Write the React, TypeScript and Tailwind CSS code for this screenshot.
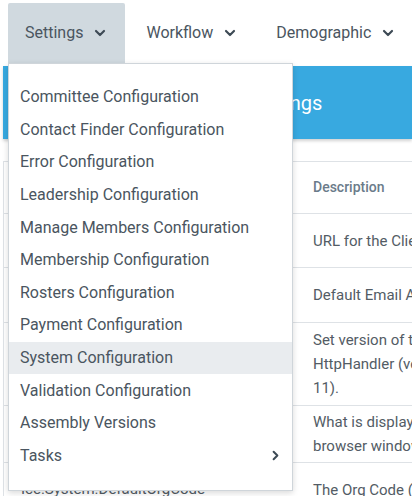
import React from 'react';
import { ChevronDown, ChevronRight } from 'lucide-react';

const NAV_ITEMS = ['Settings', 'Workflow', 'Demographic'];

const MENU_ITEMS = [
    'Committee Configuration',
    'Contact Finder Configuration',
    'Error Configuration',
    'Leadership Configuration',
    'Manage Members Configuration',
    'Membership Configuration',
    'Rosters Configuration',
    'Payment Configuration',
    'System Configuration',
    'Validation Configuration',
    'Assembly Versions',
    'Tasks',
];

const ROWS: { key: string; desc: string[]; h: string }[] = [
    { key: 'Ice.System.ClientUrl', desc: ['URL for the Client'], h: 'h-[54px]' },
    { key: 'Ice.System.DefaultEmail', desc: ['Default Email Address'], h: 'h-[55px]' },
    { key: 'Ice.System.HttpHandler', desc: ['Set version of the', 'HttpHandler (version', '11).'], h: 'h-[83px]' },
    { key: 'Ice.System.BrowserTitle', desc: ['What is displayed in', 'browser window'], h: 'h-[57px]' },
    { key: 'Ice.System.DefaultOrgCode', desc: ['The Org Code (default)'], h: 'h-[54px]' },
];

const App: React.FC = () => {
    return (
        <div className="relative w-[412px] h-[496px] overflow-hidden bg-white font-['Roboto',sans-serif] text-[#4a5560]">
            {/* top nav */}
            <nav className="flex h-[63px] pl-[8px] pt-[3px] gap-[4px]">
                {NAV_ITEMS.map((item, i) => (
                    <div
                        key={item}
                        className={`flex items-center gap-[9px] pl-[17px] pr-[17px] text-[16px] whitespace-nowrap rounded-t-[2px] ${
                            i === 0 ? 'bg-[#d0d9df]' : ''
                        }`}
                    >
                        <span>{item}</span>
                        <ChevronDown size={16} strokeWidth={3.2} className="text-[#3d4a55]" />
                    </div>
                ))}
            </nav>

            {/* title banner */}
            <div className="ml-[3px] mt-[3px] h-[73px] bg-[#38a9e0] shadow-[0_2px_3px_rgba(0,0,0,0.18)] flex items-center pl-[50px]">
                <h1 className="text-[20px] text-white whitespace-nowrap">System Configuration Settings</h1>
            </div>

            {/* table */}
            <div className="ml-[3px] mt-[22px] border-l border-t border-[#dee2e6] text-[15px] text-[#535c65]">
                <div className="flex h-[52px] items-center border-b border-[#dee2e6]">
                    <div className="w-[293px] shrink-0 pl-[17px] text-[14px] font-medium text-[#6b7b8a]">Key</div>
                    <div className="pl-[16px] text-[14px] font-medium text-[#6b7b8a]">Description</div>
                </div>
                {ROWS.map((row) => (
                    <div key={row.key} className={`flex items-center border-b border-[#dee2e6] ${row.h}`}>
                        <div className="w-[293px] shrink-0 overflow-hidden pl-[17px] whitespace-nowrap">{row.key}</div>
                        <div className="pl-[16px] leading-[24px] whitespace-nowrap">
                            {row.desc.map((line) => (
                                <div key={line}>{line}</div>
                            ))}
                        </div>
                    </div>
                ))}
            </div>

            {/* settings dropdown */}
            <div className="absolute left-[8px] top-[63px] w-[285px] bg-white border border-[#cfd5da] shadow-[0_2px_6px_rgba(0,0,0,0.15)] pt-[17px] pb-[18px]">
                {MENU_ITEMS.map((item) => (
                    <div
                        key={item}
                        className={`flex items-center justify-between h-[32.6px] pl-[11px] pr-[9px] text-[16px] ${
                            item === 'System Configuration' ? 'bg-[#e9ecef]' : ''
                        }`}
                    >
                        <span>{item}</span>
                        {item === 'Tasks' && <ChevronRight size={15} strokeWidth={3.2} className="text-[#3d4a55]" />}
                    </div>
                ))}
            </div>
        </div>
    );
};

export default App;
